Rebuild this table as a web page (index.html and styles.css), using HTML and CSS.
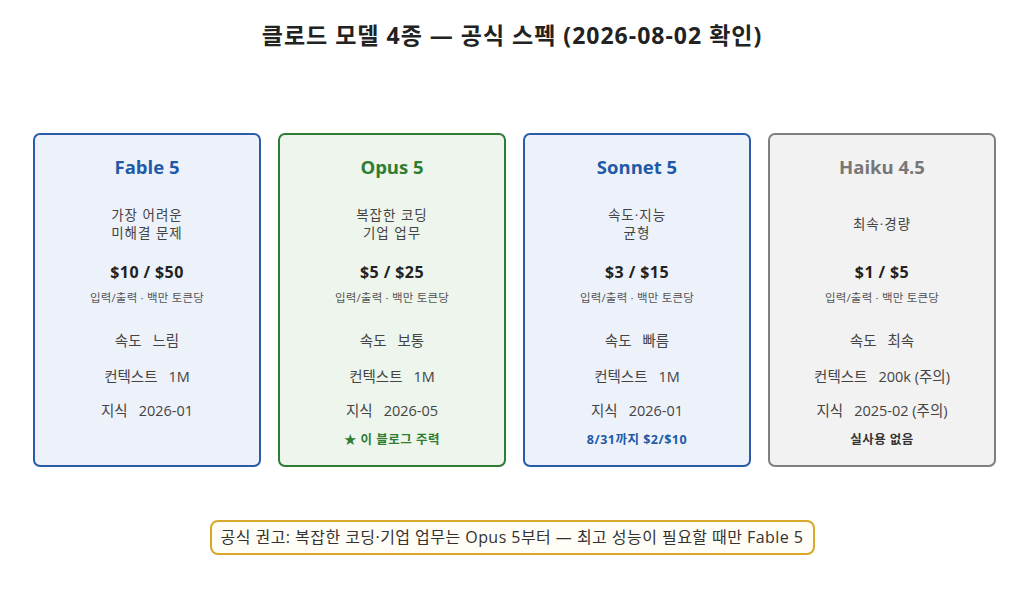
FILE: index.html
```html
<!DOCTYPE html>
<html lang="ko">
<head>
<meta charset="utf-8">
<link rel="stylesheet" href="styles.css">
</head>
<body>
<h1 class="title">클로드 모델 4종 — 공식 스펙 (2026-08-02 확인)</h1>
<div class="cards">
  <div class="card blue">
    <div class="name">Fable 5</div>
    <div class="desc"><span>가장 어려운</span><span>미해결 문제</span></div>
    <div class="price">$10 / $50</div>
    <div class="unit">입력/출력 · 백만 토큰당</div>
    <div class="row r1"><span class="k">속도</span><span>느림</span></div>
    <div class="row r2"><span class="k">컨텍스트</span><span>1M</span></div>
    <div class="row r3"><span class="k">지식</span><span>2026-01</span></div>
  </div>
  <div class="card green">
    <div class="name">Opus 5</div>
    <div class="desc"><span>복잡한 코딩</span><span>기업 업무</span></div>
    <div class="price">$5 / $25</div>
    <div class="unit">입력/출력 · 백만 토큰당</div>
    <div class="row r1"><span class="k">속도</span><span>보통</span></div>
    <div class="row r2"><span class="k">컨텍스트</span><span>1M</span></div>
    <div class="row r3"><span class="k">지식</span><span>2026-05</span></div>
    <div class="note">★ 이 블로그 주력</div>
  </div>
  <div class="card blue">
    <div class="name">Sonnet 5</div>
    <div class="desc"><span>속도·지능</span><span>균형</span></div>
    <div class="price">$3 / $15</div>
    <div class="unit">입력/출력 · 백만 토큰당</div>
    <div class="row r1"><span class="k">속도</span><span>빠름</span></div>
    <div class="row r2"><span class="k">컨텍스트</span><span>1M</span></div>
    <div class="row r3"><span class="k">지식</span><span>2026-01</span></div>
    <div class="note">8/31까지 $2/$10</div>
  </div>
  <div class="card gray">
    <div class="name">Haiku 4.5</div>
    <div class="desc"><span>최속·경량</span></div>
    <div class="price">$1 / $5</div>
    <div class="unit">입력/출력 · 백만 토큰당</div>
    <div class="row r1"><span class="k">속도</span><span>최속</span></div>
    <div class="row r2"><span class="k">컨텍스트</span><span>200k (주의)</span></div>
    <div class="row r3"><span class="k">지식</span><span>2025-02 (주의)</span></div>
    <div class="note">실사용 없음</div>
  </div>
</div>
<div class="footer">
  <div class="tip">공식 권고: 복잡한 코딩·기업 업무는 Opus 5부터 — 최고 성능이 필요할 때만 Fable 5</div>
</div>
</body>
</html>
```
FILE: styles.css
```css
* { box-sizing: border-box; }
html, body { margin: 0; padding: 0; background: #ffffff; }
body {
  width: 1024px;
  height: 602px;
  font-family: "Open Sans", "Noto Sans CJK KR", sans-serif;
  color: #333;
}
.title {
  margin: 0;
  padding-top: 20px;
  height: 51px;
  line-height: 30px;
  font-size: 23px;
  letter-spacing: 1px;
  font-weight: 700;
  text-align: center;
  color: #222;
}
.cards {
  display: flex;
  gap: 17px;
  padding-left: 33px;
  margin-top: 82px;
}
.card {
  width: 228px;
  height: 334px;
  border: 2.5px solid #2a5caa;
  border-radius: 7px;
  background: #edf2fa;
  display: flex;
  flex-direction: column;
  align-items: center;
  padding-top: 20px;
}
.card.green { border-color: #2e7d32; background: #edf5ec; }
.card.gray { border-color: #7f7f7f; background: #f2f2f2; }
.name {
  height: 24px;
  line-height: 24px;
  font-size: 18.5px;
  font-weight: 700;
  color: #1f5aa8;
}
.green .name { color: #2e7d32; }
.gray .name { color: #777; }
.desc {
  margin-top: 27px;
  height: 36px;
  display: flex;
  flex-direction: column;
  justify-content: center;
  align-items: center;
  font-size: 13.5px;
  letter-spacing: 1px;
  line-height: 18px;
  color: #444;
}
.price {
  margin-top: 20px;
  height: 20px;
  line-height: 20px;
  font-size: 16px;
  letter-spacing: 0.4px;
  font-weight: 700;
  color: #222;
}
.unit {
  margin-top: 9px;
  height: 14px;
  line-height: 14px;
  font-size: 11.5px;
  letter-spacing: 0.2px;
  color: #555;
}
.row {
  height: 18px;
  line-height: 18px;
  font-size: 14.5px;
  color: #444;
  display: flex;
  gap: 11px;
}
.r1 { margin-top: 27px; }
.r2 { margin-top: 18px; }
.r3 { margin-top: 16px; }
.note {
  margin-top: 13px;
  height: 14px;
  line-height: 14px;
  font-size: 12.5px;
  letter-spacing: 0.5px;
  font-weight: 700;
  color: #333;
}
.green .note { color: #2e7d32; }
.blue .note { color: #1f5aa8; }
.footer {
  display: flex;
  justify-content: center;
  margin-top: 53px;
}
.tip {
  width: 605px;
  height: 35px;
  border: 2px solid #d9a82a;
  border-radius: 8px;
  background: #fffdf6;
  font-size: 16px;
  letter-spacing: 0.45px;
  line-height: 31px;
  text-align: center;
  color: #333;
  white-space: nowrap;
}
```
